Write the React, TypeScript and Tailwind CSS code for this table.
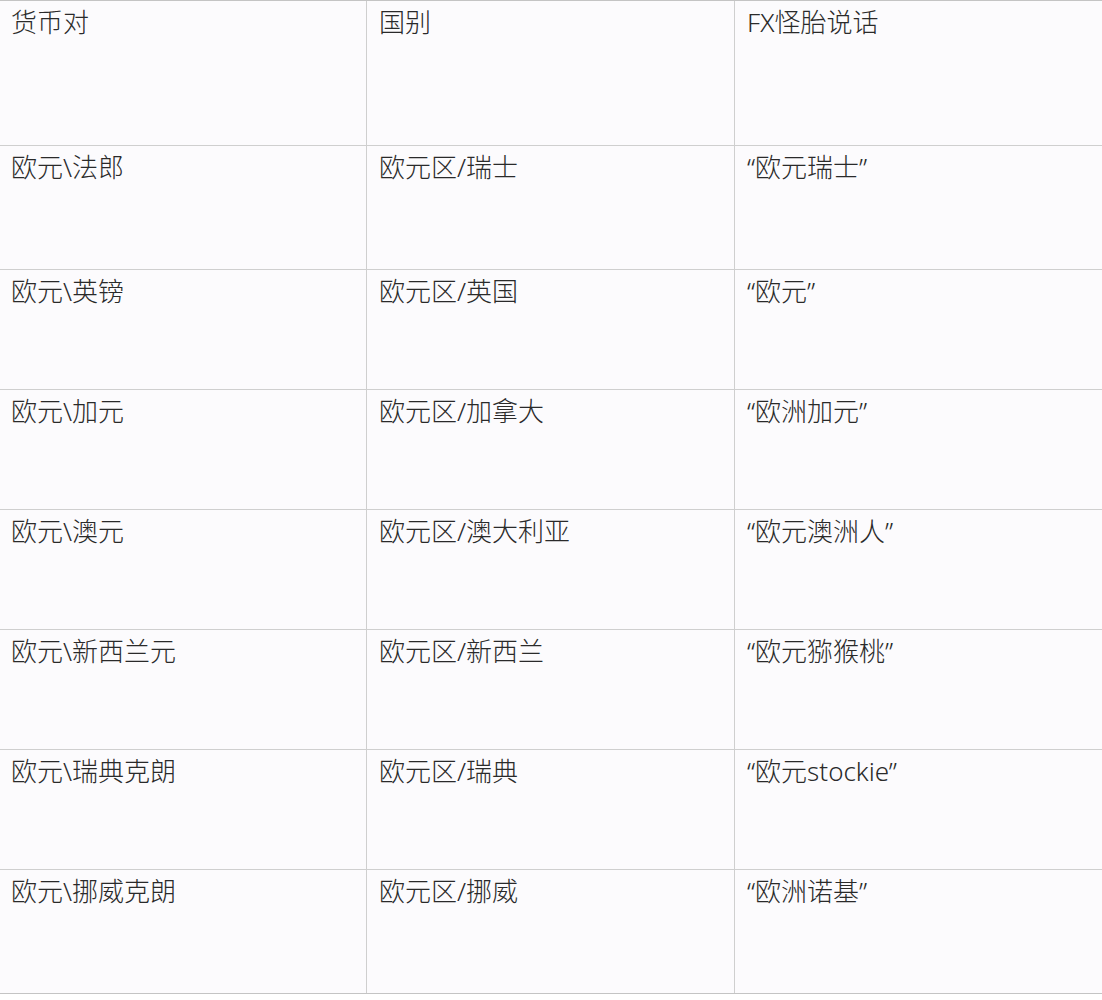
import React from "react";

const rows: [string, string, string, number][] = [
  ["货币对", "国别", "FX怪胎说话", 145],
  ["欧元\\法郎", "欧元区/瑞士", "“欧元瑞士”", 124],
  ["欧元\\英镑", "欧元区/英国", "“欧元”", 120],
  ["欧元\\加元", "欧元区/加拿大", "“欧洲加元”", 120],
  ["欧元\\澳元", "欧元区/澳大利亚", "“欧元澳洲人”", 120],
  ["欧元\\新西兰元", "欧元区/新西兰", "“欧元猕猴桃”", 120],
  ["欧元\\瑞典克朗", "欧元区/瑞典", "“欧元stockie”", 120],
  ["欧元\\挪威克朗", "欧元区/挪威", "“欧洲诺基”", 124],
];

export default function App() {
  return (
    <div className="w-[1102px] h-[1000px] bg-white">
      <div
        className="w-[1102px] bg-[#fcfbfd] border-t border-b border-[#c4c4c4] text-[#2a2a2a] text-[26px] leading-[36px] font-light"
        style={{ fontFamily: '"Noto Sans", "Noto Sans CJK SC", sans-serif' }}
      >
        {rows.map(([a, b, c, h], i) => (
          <div
            key={i}
            className={`flex ${i > 0 ? "border-t border-[#cfcfcf]" : ""}`}
            style={{ height: i === 0 ? h - 1 : h }}
          >
            <div className="w-[367px] pl-[11px] pt-[3px] border-r border-[#cfcfcf] whitespace-nowrap">{a}</div>
            <div className="w-[368px] pl-[12px] pt-[3px] border-r border-[#cfcfcf] whitespace-nowrap">{b}</div>
            <div className="flex-1 pl-[12px] pt-[3px] whitespace-nowrap">{c}</div>
          </div>
        ))}
      </div>
    </div>
  );
}
